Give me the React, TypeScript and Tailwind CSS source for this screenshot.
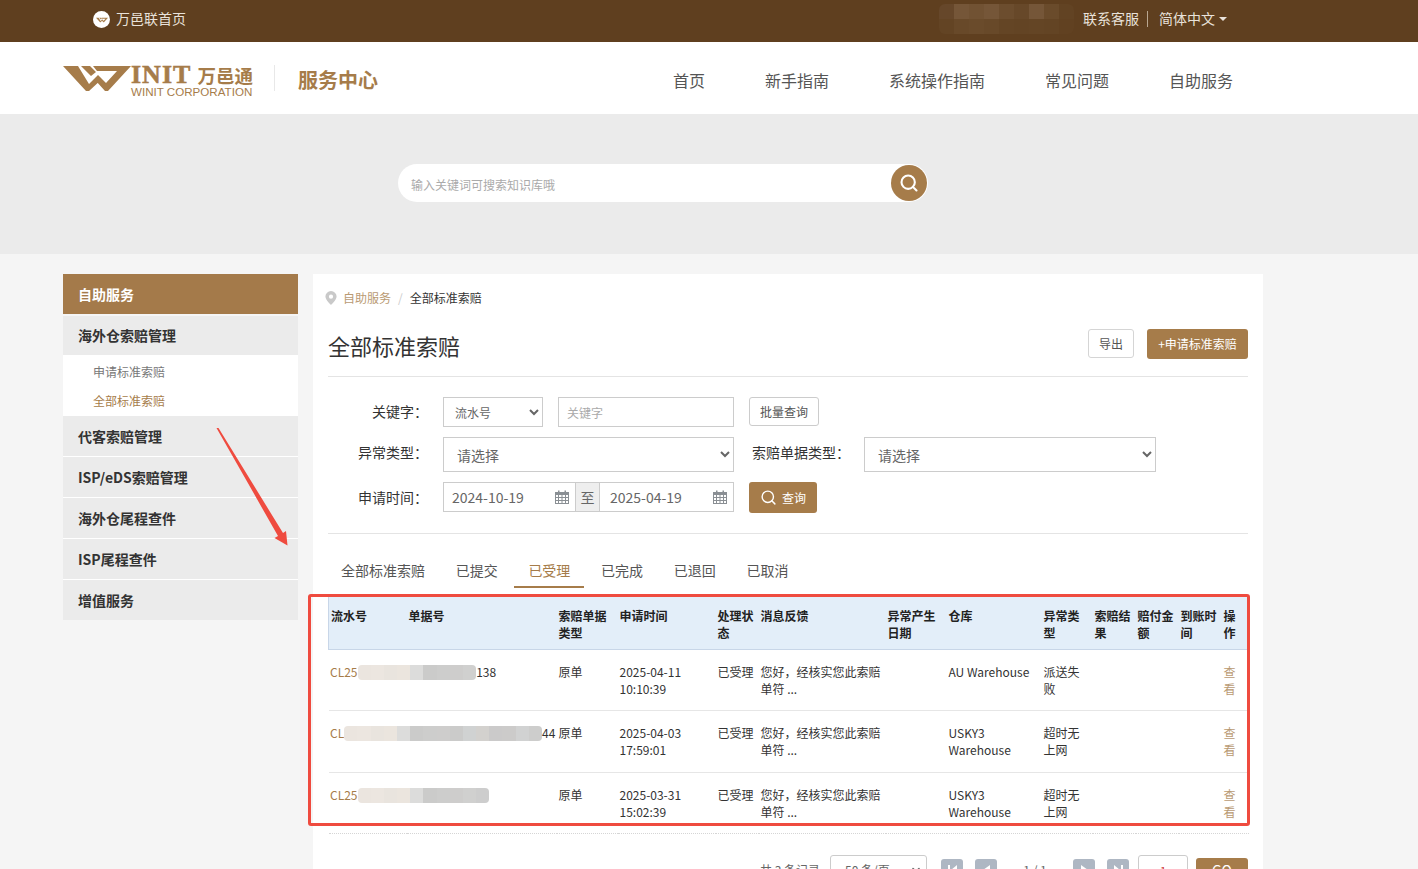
import type React from "react"
import { ChevronDown, Search } from "lucide-react"

const tabs = ["全部标准索赔", "已提交", "已受理", "已完成", "已退回", "已取消"]
const navItems = ["首页", "新手指南", "系统操作指南", "常见问题", "自助服务"]
const sideItems = ["代客索赔管理", "ISP/eDS索赔管理", "海外仓尾程查件", "ISP尾程查件", "增值服务"]
const headers = ["流水号", "单据号", "索赔单据类型", "申请时间", "处理状态", "消息反馈", "异常产生日期", "仓库", "异常类型", "索赔结果", "赔付金额", "到账时间", "操作"]

const warm = ["#ebe5df", "#ece6e0", "#e9e4de", "#ebe5de", "#dcdcdb", "#cbcbca", "#cdcdcc", "#cecdcc"]

const rows = [
  {
    prefix: "CL25",
    suffix: "138",
    blur: [...warm, "#d0d0cf"],
    time: ["2025-04-11", "10:10:39"],
    warehouse: "AU Warehouse",
    type: "派送失败",
  },
  {
    prefix: "CL",
    suffix: "44",
    blur: [...warm, "#cbcbca", "#d0d2d2", "#d3d1ce", "#cbcaca", "#cccbca", "#d1d2d2", "#cdcdcc"],
    time: ["2025-04-03", "17:59:01"],
    warehouse: "USKY3 Warehouse",
    type: "超时无上网",
  },
  {
    prefix: "CL25",
    suffix: "",
    blur: [...warm, "#d0d0cf", "#cdcdcd"],
    time: ["2025-03-31", "15:02:39"],
    warehouse: "USKY3 Warehouse",
    type: "超时无上网",
  },
]

function Mosaic({ colors }: { colors: string[] }) {
  return (
    <span className="inline-flex h-[15px] overflow-hidden rounded-[4px] align-[-3px]">
      {colors.map((c, i) => (
        <span key={i} className="block h-full w-[13.2px]" style={{ backgroundColor: c }} />
      ))}
    </span>
  )
}

function LogoMark({ w, h }: { w: number; h: number }) {
  return (
    <svg width={w} height={h} viewBox="0 0 68 25" className="shrink-0">
      <path
        fill="#a67c4a"
        d="M0 0H15L26 18L35 9L39 13L26 25H23ZM18 0H27L33 6L28 10ZM30 0H68L45 25H42L33 15L37 11L43 17L54 5H34Z"
      />
    </svg>
  )
}

function CalendarIcon() {
  return (
    <svg width="14" height="14" viewBox="0 0 14 14" className="shrink-0" fill="#8a8f94">
      <path d="M0 2H3V0.5H4.5V2H9.5V0.5H11V2H14V14H0ZM1 5V7H3V5ZM4 5V7H6.5V5ZM7.5 5V7H10V5ZM11 5V7H13V5ZM1 8V10H3V8ZM4 8V10H6.5V8ZM7.5 8V10H10V8ZM11 8V10H13V8ZM1 11V13H3V11ZM4 11V13H6.5V11ZM7.5 11V13H10V11ZM11 11V13H13V11Z" />
    </svg>
  )
}

function PageButton({ children }: { children: React.ReactNode }) {
  return <div className="flex h-[22px] w-[22px] items-center justify-center gap-px rounded-[3px] bg-[#aeb7c3]">{children}</div>
}

export default function App() {
  return (
    <div className="relative h-screen overflow-hidden bg-[#f5f5f5] font-[Noto_Sans_CJK_SC,sans-serif] text-[12px] text-[#333]">
      {/* top bar */}
      <div className="flex h-[42px] items-center justify-between bg-[#5f3f1f] pb-[5px] pl-[93px] pr-[191px] text-[14px] text-[#e9e2da]">
        <div className="flex items-center gap-[6px]">
          <div className="mt-[2px] flex h-[17px] w-[17px] items-center justify-center rounded-full bg-white">
            <LogoMark w={12} h={6} />
          </div>
          <span>万邑联首页</span>
        </div>
        <div className="flex items-center">
          <span className="mr-[8px] inline-flex h-[30px] flex-col overflow-hidden rounded-[6px]">
            <span className="flex h-[15px]">
              {["#66472a", "#755638", "#715233", "#755638", "#6c4d2e", "#674829", "#755638", "#6a4b2b", "#624323"].map((c, i) => (
                <span key={i} className="block h-full w-[15px]" style={{ backgroundColor: c }} />
              ))}
            </span>
            <span className="flex h-[15px]">
              {["#634424", "#684929", "#6a4b2b", "#684929", "#644525", "#634424", "#644525", "#634424", "#614121"].map((c, i) => (
                <span key={i} className="block h-full w-[15px]" style={{ backgroundColor: c }} />
              ))}
            </span>
          </span>
          <span className="ml-px">联系客服</span>
          <span className="mx-[8px] h-[16px] w-px bg-[#b9a791]" />
          <span className="ml-[3px]">简体中文</span>
          <span className="ml-[4px] h-0 w-0 border-x-[4px] border-t-[4px] border-x-transparent border-t-[#e9e2da]" />
        </div>
      </div>

      {/* header */}
      <div className="flex h-[72px] items-center bg-white pl-[63px]">
        <div className="flex items-center">
          <LogoMark w={68} h={25} />
          <div className="mt-[5px] flex w-[122px] flex-col">
            <div className="flex h-[22px] items-center justify-between leading-none text-[#a67c4a]">
              <span className="font-[Liberation_Serif,serif] text-[26px] font-bold tracking-[1px] [-webkit-text-stroke:0.5px_#a67c4a]">INIT</span>
              <span className="text-[18.5px] font-bold">万邑通</span>
            </div>
            <span className="whitespace-nowrap font-[Liberation_Sans,sans-serif] text-[11.6px] leading-[11px] text-[#a67c4a]">
              WINIT CORPORATION
            </span>
          </div>
        </div>
        <div className="ml-[21px] h-[26px] w-px bg-[#e8e8e8]" />
        <span className="ml-[23px] mt-[4px] text-[20px] font-bold text-[#a67c4a]">服务中心</span>
        <nav className="ml-[295px] mt-[4px] flex gap-[60px] text-[16px] text-[#555]">
          {navItems.map((n) => (
            <span key={n}>{n}</span>
          ))}
        </nav>
      </div>

      {/* search band */}
      <div className="flex h-[140px] items-start bg-[#ebebeb] pl-[398px] pt-[50px]">
        <div className="flex h-[38px] w-[530px] items-center justify-between rounded-full bg-white pl-[13px] pr-px">
          <span className="pt-[3px] text-[#aaa]">输入关键词可搜索知识库哦</span>
          <div className="flex h-[36px] w-[36px] items-center justify-center rounded-full bg-[#a67c4a]">
            <Search className="h-[20px] w-[20px] text-white" strokeWidth={2.5} />
          </div>
        </div>
      </div>

      {/* main */}
      <div className="flex items-start gap-[15px] pl-[63px] pt-[20px]">
        <aside className="w-[235px]">
          <div className="mb-[2px] flex h-[40px] items-center bg-[#a47a4a] pl-[15px] text-[14px] font-bold text-white">自助服务</div>
          <div className="flex h-[39px] items-center bg-[#ebebeb] pl-[15px] text-[14px] font-bold">海外仓索赔管理</div>
          <div className="flex h-[61px] flex-col bg-white pl-[30px] pt-[2px]">
            <span className="flex h-[30px] items-center text-[#777]">申请标准索赔</span>
            <span className="flex h-[30px] items-center text-[#a67c4a]">全部标准索赔</span>
          </div>
          {sideItems.map((s) => (
            <div key={s} className="box-content flex h-[40px] items-center border-b border-white bg-[#ebebeb] pl-[15px] text-[14px] font-bold last:border-b-0">
              {s}
            </div>
          ))}
        </aside>

        <section className="h-[600px] w-[950px] bg-white px-[15px]">
          {/* breadcrumb */}
          <div className="flex h-[50px] items-center pb-[2px]">
            <svg width="12" height="14" viewBox="0 0 12 14" className="-ml-[3px]">
              <path fill="#c9c9c9" fillRule="evenodd" d="M6 0a5.6 5.6 0 0 1 5.6 5.6C11.6 9 6 14 6 14S.4 9 .4 5.6A5.6 5.6 0 0 1 6 0Zm0 3.6a2.1 2.1 0 1 0 0 4.2 2.1 2.1 0 0 0 0-4.2Z" />
            </svg>
            <span className="ml-[6px] text-[#b99a73]">自助服务</span>
            <span className="mx-[7px] text-[#ccc]">/</span>
            <span>全部标准索赔</span>
          </div>

          {/* title */}
          <div className="flex h-[53px] items-start justify-between border-b border-[#e4e4e4] pt-[5px]">
            <h1 className="text-[22px] font-normal leading-[32px]">全部标准索赔</h1>
            <div className="flex gap-[13px]">
              <button className="flex h-[29px] w-[46px] items-center justify-center rounded-[3px] border border-[#d5d5d5] bg-white text-[#555]">导出</button>
              <button className="flex h-[30px] w-[101px] items-center justify-center rounded-[3px] bg-[#a67c4a] text-white">+申请标准索赔</button>
            </div>
          </div>

          {/* filters */}
          <div className="border-b border-[#e4e4e4] py-[20px]">
            <div className="flex items-start">
              <label className="flex h-[30px] w-[100px] items-center justify-end pb-[2px] text-[14px]">关键字：</label>
              <select className="ml-[15px] h-[30px] w-[100px] border border-[#ccc] bg-white pl-[7px] text-[12px] text-[#666]">
                <option>流水号</option>
              </select>
              <input placeholder="关键字" className="ml-[15px] h-[30px] w-[176px] border border-[#ccc] px-[8px] text-[12px] placeholder:text-[#aaa]" />
              <button className="ml-[15px] h-[29px] w-[70px] rounded-[3px] border border-[#ccc] bg-white text-[#555]">批量查询</button>
            </div>
            <div className="mt-[10px] flex items-center">
              <label className="flex w-[100px] justify-end pb-[4px] text-[14px]">异常类型：</label>
              <select className="ml-[15px] h-[35px] w-[291px] border border-[#ccc] bg-white pl-[9px] text-[14px] text-[#666]">
                <option>请选择</option>
              </select>
              <label className="ml-[18px] w-[112px] pb-[4px] text-[14px]">索赔单据类型：</label>
              <select className="h-[35px] w-[292px] border border-[#ccc] bg-white pl-[9px] text-[14px] text-[#666]">
                <option>请选择</option>
              </select>
            </div>
            <div className="mt-[10px] flex items-start">
              <label className="flex h-[30px] w-[100px] items-center justify-end text-[14px]">申请时间：</label>
              <div className="ml-[15px] flex h-[30px] w-[291px] border border-[#ccc] text-[14px] text-[#666]">
                <div className="flex flex-1 items-center justify-between pl-[8px] pr-[6px]">
                  <span>2024-10-19</span>
                  <CalendarIcon />
                </div>
                <div className="flex w-[25px] items-center justify-center border-x border-[#ccc] bg-[#eee]">至</div>
                <div className="flex w-[133px] items-center justify-between pl-[10px] pr-[6px]">
                  <span>2025-04-19</span>
                  <CalendarIcon />
                </div>
              </div>
              <button className="ml-[15px] flex h-[31px] w-[68px] items-center justify-center gap-[5px] rounded-[3px] bg-[#a67c4a] text-white">
                <Search className="h-[17px] w-[17px]" strokeWidth={2} />
                查询
              </button>
            </div>
          </div>

          {/* tabs */}
          <div className="-ml-px mt-[20px] flex h-[34px] gap-[2.7px] text-[14px] text-[#555]">
            {tabs.map((t, i) => (
              <div
                key={t}
                className={
                  i === 2
                    ? "flex items-center border-b-2 border-[#a67c4a] px-[14px] text-[#a67c4a]"
                    : "flex items-center border-b-2 border-transparent px-[14px]"
                }
              >
                {t}
              </div>
            ))}
          </div>

          {/* table */}
          <table className="mt-[9px] w-[920px] table-fixed border-collapse">
            <colgroup>
              <col className="w-[78px]" />
              <col className="w-[150px]" />
              <col className="w-[61px]" />
              <col className="w-[98px]" />
              <col className="w-[43px]" />
              <col className="w-[127px]" />
              <col className="w-[61px]" />
              <col className="w-[95px]" />
              <col className="w-[51px]" />
              <col className="w-[43px]" />
              <col className="w-[43px]" />
              <col className="w-[43px]" />
              <col className="w-[27px]" />
            </colgroup>
            <thead>
              <tr className="h-[52px] border-b border-l border-[#c8d6e8] bg-[#e3eef9]">
                {headers.map((h) => (
                  <th key={h} className="pb-[8px] pl-[2px] pr-[4px] pt-[10px] text-left align-top text-[12px] font-bold leading-[17px] text-[#222]">
                    {h}
                  </th>
                ))}
              </tr>
            </thead>
            <tbody>
              {rows.map((r) => (
                <tr key={r.time[0]} className="h-[61px] border-b border-[#e6e6e6] align-top leading-[17px] even:h-[62px] last:border-dotted last:border-[#d5d5d5]">
                  <td colSpan={2} className="whitespace-nowrap pl-[1.5px] pt-[13px] text-[#a67c4a]">
                    {r.prefix}
                    <Mosaic colors={r.blur} />
                    <span className="text-[#333]">{r.suffix}</span>
                  </td>
                  <td className="pl-[2px] pr-[4px] pt-[13px]">原单</td>
                  <td className="pl-[2px] pr-[4px] pt-[13px]">
                    {r.time[0]}
                    <br />
                    {r.time[1]}
                  </td>
                  <td className="pl-[2px] pr-[4px] pt-[13px]">已受理</td>
                  <td className="pl-[2px] pr-[4px] pt-[13px]">您好，经核实您此索赔单符 ...</td>
                  <td />
                  <td className="pl-[2px] pr-[4px] pt-[13px]">{r.warehouse}</td>
                  <td className="pl-[2px] pr-[4px] pt-[13px]">{r.type}</td>
                  <td />
                  <td />
                  <td />
                  <td className="pl-[2px] pr-[4px] pt-[13px] text-[#b99a73]">查看</td>
                </tr>
              ))}
            </tbody>
          </table>

          {/* pagination */}
          <div className="mt-[21px] flex h-[30px] items-center justify-end text-[#666]">
            <span>共 3 条记录</span>
            <div className="ml-[10px] flex h-[30px] w-[97px] items-center justify-between rounded-[3px] border border-[#ccc] pl-[14px] pr-[4px]">
              <span>50 条/页</span>
              <ChevronDown className="h-[12px] w-[12px]" strokeWidth={3} />
            </div>
            <div className="ml-[14px] flex items-center gap-[12px]">
              <PageButton>
                <span className="h-[10px] w-[2px] bg-white" />
                <span className="h-0 w-0 border-y-[5px] border-r-[6px] border-y-transparent border-r-white" />
              </PageButton>
              <PageButton>
                <span className="h-0 w-0 border-y-[5px] border-r-[7px] border-y-transparent border-r-white" />
              </PageButton>
              <span className="w-[52px] text-center">1 / 1</span>
              <PageButton>
                <span className="h-0 w-0 border-y-[5px] border-l-[7px] border-y-transparent border-l-white" />
              </PageButton>
              <PageButton>
                <span className="h-0 w-0 border-y-[5px] border-l-[6px] border-y-transparent border-l-white" />
                <span className="h-[10px] w-[2px] bg-white" />
              </PageButton>
            </div>
            <input defaultValue="1" className="ml-[9px] h-[30px] w-[50px] rounded-[3px] border border-[#ccc] text-center text-[#c33]" />
            <button className="ml-[8px] h-[24px] w-[52px] rounded-t-[3px] bg-[#a67c4a] text-[14px] text-white">GO</button>
          </div>
        </section>
      </div>

      {/* red annotation box and arrow */}
      <div className="absolute left-[308px] top-[594px] h-[232px] w-[942px] rounded-[3px] border-[3px] border-[#ef4b3f]" />
      <svg className="absolute left-[210px] top-[420px]" width="90" height="135" viewBox="0 0 90 135">
        <path fill="#ef4b3f" d="M6.5 8L8.5 8L73 113L76 111L77.5 125.5L64.5 118L68 116Z" />
      </svg>
    </div>
  )
}
